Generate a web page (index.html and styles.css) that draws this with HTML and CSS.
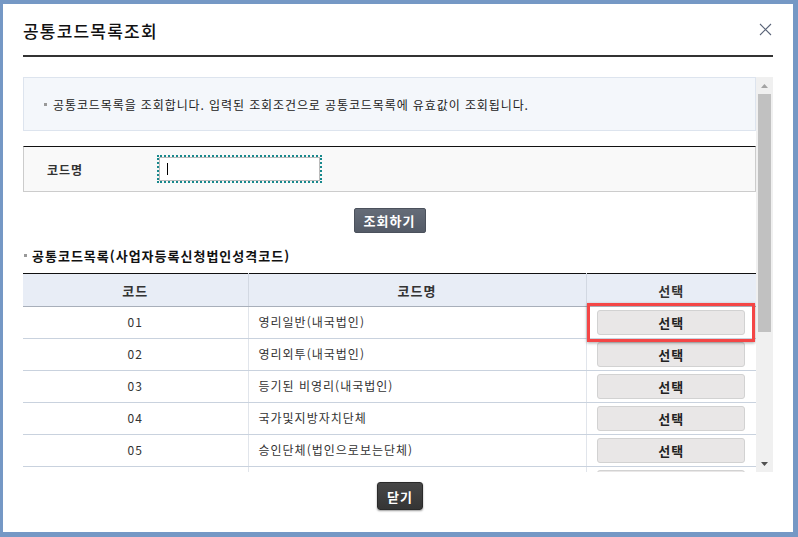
FILE: index.html
```html
<!DOCTYPE html>
<html lang="ko">
<head>
  <meta charset="UTF-8">
  <meta name="viewport" content="width=device-width, initial-scale=1.0">
  <title>공통코드목록조회</title>
  <link rel="stylesheet" href="styles.css">
</head>
<body>
  <!-- Popup Window -->
  <div class="popup">
    <div class="popup-header">
      <h1>공통코드목록조회</h1>
      <a href="#" class="popup-close" title="닫기">
        <svg width="13" height="13" viewBox="0 0 13 13">
          <path d="M1 1 L12 12 M12 1 L1 12" stroke="#5a6478" stroke-width="1.1" fill="none"/>
        </svg>
      </a>
    </div>

    <div class="popup-body">
      <div class="scroll-content">
        <!-- Guide -->
        <div class="guide-box">
          <p class="bullet">공통코드목록을 조회합니다. 입력된 조회조건으로 공통코드목록에 유효값이 조회됩니다.</p>
        </div>

        <!-- Search Condition -->
        <div class="search-box">
          <label for="codeName" class="search-label">코드명</label>
          <div class="search-field">
            <input type="text" id="codeName" class="search-input" autofocus>
            <span class="caret"></span>
          </div>
        </div>
        <div class="btn-area">
          <button class="btn-search">조회하기</button>
        </div>

        <!-- Result List -->
        <h2 class="sub-title bullet">공통코드목록(사업자등록신청법인성격코드)</h2>
        <table class="grid">
          <thead>
            <tr>
              <th class="col-code">코드</th>
              <th class="col-name">코드명</th>
              <th class="col-select">선택</th>
            </tr>
          </thead>
          <tbody>
            <tr>
              <td class="center">01</td>
              <td>영리일반(내국법인)</td>
              <td class="center select-cell"><button class="btn-select">선택</button><span class="highlight"></span></td>
            </tr>
            <tr>
              <td class="center">02</td>
              <td>영리외투(내국법인)</td>
              <td class="center"><button class="btn-select">선택</button></td>
            </tr>
            <tr>
              <td class="center">03</td>
              <td>등기된 비영리(내국법인)</td>
              <td class="center"><button class="btn-select">선택</button></td>
            </tr>
            <tr>
              <td class="center">04</td>
              <td>국가및지방자치단체</td>
              <td class="center"><button class="btn-select">선택</button></td>
            </tr>
            <tr>
              <td class="center">05</td>
              <td>승인단체(법인으로보는단체)</td>
              <td class="center"><button class="btn-select">선택</button></td>
            </tr>
            <tr>
              <td class="center"></td>
              <td></td>
              <td class="center"><button class="btn-select"></button></td>
            </tr>
          </tbody>
        </table>
      </div>

      <!-- Scrollbar -->
      <div class="scrollbar">
        <div class="scroll-btn">
          <svg width="7" height="4" viewBox="0 0 7 4"><path d="M0 4 L3.5 0 L7 4 Z" fill="#a3a3a3"/></svg>
        </div>
        <div class="scroll-thumb"></div>
        <div class="scroll-rest"></div>
        <div class="scroll-btn">
          <svg width="7" height="4" viewBox="0 0 7 4"><path d="M0 0 L7 0 L3.5 4 Z" fill="#505050"/></svg>
        </div>
      </div>
    </div>

    <div class="popup-footer">
      <button class="btn-close">닫기</button>
    </div>
  </div>
</body>
</html>
```

FILE: styles.css
```css
/* Base Styling */
* {
  margin: 0;
  padding: 0;
  box-sizing: border-box;
}

body {
  font-family: "Noto Sans CJK KR", "Noto Sans", sans-serif;
  font-size: 12px;
  color: #333;
  background-color: #7598c5;
  overflow: hidden;
}

/* Popup Window */
.popup {
  margin: 4px 5px 5px 3px;
  height: 528px;
  background-color: #fff;
  padding: 0 20px;
}

.popup-header {
  display: flex;
  justify-content: space-between;
  align-items: center;
  height: 53px;
  padding-top: 2px;
  border-bottom: 2px solid #333;
}

.popup-header h1 {
  font-size: 17px;
  font-weight: 500;
  color: #111;
  letter-spacing: 1.2px;
}

.popup-close {
  display: block;
  width: 13px;
  height: 13px;
  margin: 0 1px 2px 0;
}

.popup-close svg {
  display: block;
}

/* Scroll Body */
.popup-body {
  display: flex;
  margin-top: 20px;
  height: 395px;
}

.scroll-content {
  flex: 1;
  overflow: hidden;
}

.scrollbar {
  width: 17px;
  display: flex;
  flex-direction: column;
  background-color: #f0f0f0;
}

.scroll-btn {
  height: 17px;
  display: flex;
  align-items: center;
  justify-content: center;
}

.scroll-thumb {
  height: 238px;
  margin: 0 2px;
  background-color: #c1c1c1;
}

.scroll-rest {
  flex: 1;
}

/* Bullet */
.bullet {
  display: flex;
  align-items: center;
}

.bullet::before {
  content: '';
  width: 3px;
  height: 3px;
  margin-right: 6px;
  background-color: #999;
  flex-shrink: 0;
}

/* Guide Box */
.guide-box {
  height: 54px;
  display: flex;
  align-items: center;
  padding-left: 20px;
  background-color: #f4f7fb;
  border: 1px solid #dde4ee;
}

.guide-box p {
  font-size: 12px;
  color: #222;
  letter-spacing: 0.9px;
}

/* Search Box */
.search-box {
  display: flex;
  align-items: center;
  height: 46px;
  margin-top: 15px;
  background-color: #f9f9f9;
  border: 1px solid #ccc;
  border-top: 1px solid #111;
}

.search-label {
  width: 135px;
  padding-left: 23px;
  font-size: 12px;
  font-weight: bold;
  color: #333;
  letter-spacing: 1px;
}

.search-field {
  position: relative;
}

.search-input {
  display: block;
  width: 161px;
  height: 24px;
  padding: 0 6px;
  border: 1px solid #bbb;
  font-family: inherit;
  font-size: 12px;
  caret-color: transparent;
  outline: 2px dotted #17888c;
}

.search-input:focus {
  outline: 2px dotted #17888c;
}

/* text cursor shown in the focused field */
.caret {
  position: absolute;
  left: 8px;
  top: 6px;
  width: 1px;
  height: 12px;
  background-color: #000;
}

.btn-area {
  display: flex;
  justify-content: center;
  margin-top: 16px;
}

.btn-search {
  width: 72px;
  height: 25px;
  background: linear-gradient(#656c78, #545b67);
  color: #fff;
  border: 1px solid #4b515c;
  border-radius: 2px;
  font-family: inherit;
  font-size: 13px;
  font-weight: bold;
  letter-spacing: 1px;
  cursor: pointer;
}

/* Sub Title */
.sub-title {
  margin-top: 15px;
  height: 15px;
  font-size: 13px;
  font-weight: bold;
  color: #111;
  letter-spacing: 1px;
}

.sub-title::before {
  margin-left: 1px;
  margin-right: 5px;
}

/* Grid Table */
.grid {
  width: 100%;
  margin-top: 10px;
  border-collapse: collapse;
  table-layout: fixed;
  border-top: 1px solid #111;
}

.grid th {
  height: 33px;
  background-color: #e8edf6;
  border-bottom: 1px solid #a8afba;
  border-left: 1px solid #d2d8e2;
  font-size: 13px;
  font-weight: bold;
  color: #333;
  letter-spacing: 1px;
}

.grid th:first-child,
.grid td:first-child {
  border-left: none;
}

.grid .col-code {
  width: 225px;
}

.grid .col-name {
  width: 338px;
}

.grid td {
  height: 32px;
  padding: 0 10px 2px;
  border-bottom: 1px solid #c9d2de;
  border-left: 1px solid #e1e5eb;
  font-size: 12px;
  color: #333;
  letter-spacing: 1px;
}

.grid td.center {
  text-align: center;
}

.btn-select {
  display: block;
  width: 148px;
  height: 25px;
  margin: 2px auto 0;
  background-color: #e9e7e7;
  border: 1px solid #d2d2d2;
  border-radius: 3px;
  font-family: inherit;
  font-size: 13px;
  font-weight: bold;
  color: #222;
  letter-spacing: 1px;
  cursor: pointer;
}

/* Highlight box over first select button */
.select-cell {
  position: relative;
}

.highlight {
  position: absolute;
  left: 0;
  top: -4px;
  width: 168px;
  height: 39px;
  border: 3px solid #f44646;
  box-shadow: 0 1px 3px rgba(0, 0, 0, 0.35);
  pointer-events: none;
}

/* Footer */
.popup-footer {
  display: flex;
  justify-content: center;
  margin-top: 10px;
}

.btn-close {
  width: 46px;
  height: 28px;
  margin-left: 4px;
  background: linear-gradient(#474747, #353535);
  color: #fff;
  border: 1px solid #2a2a2a;
  border-radius: 3px;
  box-shadow: 0 1px 2px rgba(0, 0, 0, 0.4);
  font-family: inherit;
  font-size: 13px;
  font-weight: bold;
  letter-spacing: 1px;
  cursor: pointer;
}
```
